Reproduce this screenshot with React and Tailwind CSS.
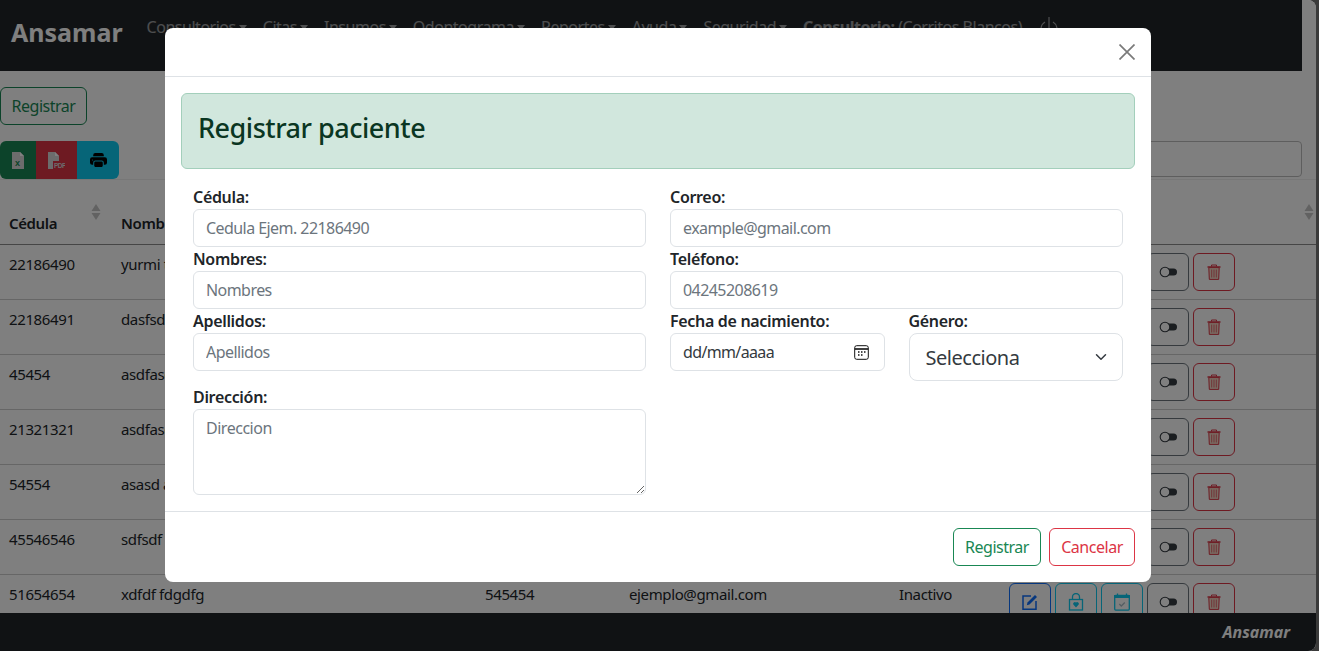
import React from "react";
import { BsPrinterFill } from "react-icons/bs";

const font = { fontFamily: '"Noto Sans", "Open Sans", sans-serif' };

const NavItem = ({ children }) => (
  <span className="flex items-center gap-[3px] whitespace-nowrap">
    {children}
    <span className="inline-block w-0 h-0 border-x-[4px] border-x-transparent border-t-[5px] border-t-current" />
  </span>
);

const SortArrows = () => (
  <svg width="10" height="16" viewBox="0 0 10 16" className="text-[#c4c4c4]" fill="currentColor">
    <path d="M5 0l4.5 7h-9z" />
    <path d="M5 16l4.5-7h-9z" />
  </svg>
);

const XlsIcon = () => (
  <svg width="12" height="17" viewBox="0 0 12 17">
    <path d="M0 0h8l4 4v13H0z" fill="#d8d8d8" />
    <path d="M8 0l4 4H8z" fill="#ffffff" />
    <text x="3" y="14" fontSize="9" fontWeight="700" fill="#198754" fontFamily="Liberation Sans, sans-serif">x</text>
  </svg>
);

const PdfIcon = () => (
  <svg width="17" height="17" viewBox="0 0 17 17">
    <path d="M0 0h7l4 4v5H5v8H0z" fill="#d8d8d8" />
    <path d="M7 0l4 4H7z" fill="#ffffff" />
    <text x="6" y="16" fontSize="6.5" fontWeight="700" fill="#d8d8d8" fontFamily="Liberation Sans, sans-serif">PDF</text>
  </svg>
);

const ActionBtn = ({ border, children }) => (
  <span className={`w-[42px] h-[38px] shrink-0 border rounded-[6px] flex items-center justify-center ${border}`}>
    {children}
  </span>
);

const Row = ({ ced, name, tel, mail, status }) => (
  <tr className="border-b border-[#cccccc] h-[55px] align-top">
    <td className="pl-[9px] pt-[7px] leading-[24px]">{ced}</td>
    <td className="pl-[9px] pt-[7px] leading-[24px] whitespace-nowrap">{name}</td>
    <td className="pl-[9px] pt-[7px] leading-[24px]">{tel}</td>
    <td className="pl-[9px] pt-[7px] leading-[24px]">{mail}</td>
    <td className="pl-[9px] pt-[7px] leading-[24px]">{status}</td>
    <td className="pl-[9px] pt-[8px]">
      <div className="flex gap-[4px]">
        <ActionBtn border="border-[#0d6efd] text-[#0d6efd]">
          <svg width="18" height="18" viewBox="0 0 18 18" fill="none">
            <path d="M15 8v8.2H2V3h8" stroke="currentColor" strokeWidth="1.5" />
            <path d="M6.5 9.5L14 2l2 2-7.5 7.5-2.7.7z" fill="currentColor" />
          </svg>
        </ActionBtn>
        <ActionBtn border="border-[#0dcaf0] text-[#0dcaf0]">
          <svg width="16" height="18" viewBox="0 0 16 18" fill="none">
            <path d="M4.5 6V4a3.5 3.5 0 017 0v2" stroke="currentColor" strokeWidth="1.3" />
            <rect x="1.5" y="6.5" width="13" height="10.5" stroke="currentColor" strokeWidth="1.3" />
            <path d="M8 14.5L5.3 11.6a1.7 1.7 0 012.7-2 1.7 1.7 0 012.7 2z" fill="currentColor" />
          </svg>
        </ActionBtn>
        <ActionBtn border="border-[#0dcaf0] text-[#0dcaf0]">
          <svg width="16" height="18" viewBox="0 0 16 18" fill="none">
            <rect x="0.7" y="2.5" width="14.6" height="14.6" rx="1" stroke="currentColor" strokeWidth="1.3" />
            <rect x="0" y="2" width="16" height="3" fill="currentColor" />
            <path d="M3.5 0.5v2M12.5 0.5v2" stroke="currentColor" strokeWidth="1.3" />
            <path d="M5.3 11l2 2 3.5-3.5" stroke="#a9bcc6" strokeWidth="1.3" />
          </svg>
        </ActionBtn>
        <ActionBtn border="border-[#6c757d] text-[#343a40]">
          <svg width="18" height="12" viewBox="0 0 18 12" fill="none">
            <rect x="7" y="2.5" width="11" height="7" rx="3.5" fill="currentColor" />
            <circle cx="6" cy="6" r="4.8" fill="#ffffff" stroke="currentColor" strokeWidth="1.1" />
          </svg>
        </ActionBtn>
        <ActionBtn border="border-[#dc3545] text-[#dc3545]">
          <svg width="14" height="16" viewBox="0 0 14 16" fill="none">
            <path d="M0.5 3h13" stroke="currentColor" strokeWidth="1.5" />
            <path d="M4.5 2.5V1h5v1.5" stroke="currentColor" strokeWidth="1" />
            <path d="M1.8 3.6h10.4l-.5 11.8H2.3z" fill="#f1d9c6" stroke="currentColor" strokeWidth="1" />
            <path d="M4.7 5.5v8M7 5.5v8M9.3 5.5v8" stroke="currentColor" strokeWidth="0.7" />
          </svg>
        </ActionBtn>
      </div>
    </td>
  </tr>
);

const rows = [
  ["22186490", "yurmi t"],
  ["22186491", "dasfsd"],
  ["45454", "asdfasd"],
  ["21321321", "asdfasd"],
  ["54554", "asasd a"],
  ["45546546", "sdfsdf"],
  ["51654654", "xdfdf fdgdfg", "545454", "ejemplo@gmail.com", "Inactivo"],
];

const inputCls =
  "block w-full h-[38px] px-[12px] border border-[#dee2e6] rounded-[6px] bg-white text-[16px] tracking-[-0.035em] placeholder:text-[#6c757d] outline-none";

const labelCls = "block h-[24px] leading-[24px] font-semibold text-[16px] tracking-[-0.02em] text-[#212529]";

const Field = ({ label, placeholder }) => (
  <div>
    <label className={labelCls}>{label}</label>
    <input className={inputCls} placeholder={placeholder} />
  </div>
);

export default function App() {
  return (
    <div className="w-[1319px] h-[651px] overflow-hidden bg-[#3a3a3a] text-[#212529] text-[16px] tracking-[-0.03em]" style={font}>
      <div className="relative w-[1316px] h-full rounded-r-[8px] overflow-hidden bg-white flex flex-col">
        <nav className="w-[1302px] h-[71px] shrink-0 bg-[#212529] flex items-start">
          <span className="ml-[11px] mt-[12px] text-[25px] font-bold text-white leading-[40px] tracking-normal">Ansamar</span>
          <div className="ml-[24px] mt-[15px] flex items-center gap-[16px] text-[16px] leading-[24px] text-white/55">
            <NavItem>Consultorios</NavItem>
            <NavItem>Citas</NavItem>
            <NavItem>Insumos</NavItem>
            <NavItem>Odontograma</NavItem>
            <NavItem>Reportes</NavItem>
            <NavItem>Ayuda</NavItem>
            <NavItem>Seguridad</NavItem>
            <span className="whitespace-nowrap"><b>Consultorio:</b> (Corritos Blancos)</span>
            <svg width="20" height="24" viewBox="0 0 20 24" fill="none" stroke="currentColor" strokeWidth="1.2" className="ml-[1px]">
              <path d="M10 2v12M6 7a8 8 0 108 0" />
            </svg>
          </div>
        </nav>

        <main className="flex-1 min-h-0 overflow-hidden pt-[16px]">
          <button className="block h-[38px] w-[87px] border border-[#198754] rounded-[6px] text-[#198754]">Registrar</button>
          <div className="mt-[16px] h-[38px] w-[1302px] flex justify-between">
            <div className="flex h-[38px] rounded-[6px] overflow-hidden">
              <span className="w-[36px] bg-[#198754] flex items-center justify-center"><XlsIcon /></span>
              <span className="w-[41px] bg-[#dc3545] flex items-center justify-center"><PdfIcon /></span>
              <span className="w-[42px] bg-[#0dcaf0] flex items-center justify-center text-black"><BsPrinterFill size={17} /></span>
            </div>
            <input className="w-[300px] h-[36px] border border-[#bdbdbd] rounded-[4px] bg-white" />
          </div>
          <table className="w-[1316px] table-fixed border-t border-[#eeeeee] border-collapse text-[15px] tracking-[-0.025em]">
            <colgroup>
              <col className="w-[112px]" />
              <col className="w-[364px]" />
              <col className="w-[144px]" />
              <col className="w-[270px]" />
              <col className="w-[110px]" />
              <col />
            </colgroup>
            <thead>
              <tr className="h-[65px] border-b border-[#8c8c8c] text-left">
                <th className="relative pl-[9px] pt-[22px] font-semibold">
                  Cédula
                  <span className="absolute top-[24px] right-[11px]"><SortArrows /></span>
                </th>
                <th className="pl-[9px] pt-[22px] font-semibold whitespace-nowrap">Nombres</th>
                <th />
                <th />
                <th />
                <th className="relative">
                  <span className="absolute top-[24px] right-[2px]"><SortArrows /></span>
                </th>
              </tr>
            </thead>
            <tbody>
              {rows.map((r) => (
                <Row key={r[0]} ced={r[0]} name={r[1]} tel={r[2]} mail={r[3]} status={r[4]} />
              ))}
            </tbody>
          </table>
        </main>

        <footer className="h-[38px] shrink-0 bg-[#212529] flex items-center justify-end pr-[26px]">
          <span className="text-[16px] font-bold italic text-white tracking-normal">Ansamar</span>
        </footer>

        <div className="absolute inset-0 bg-black/50">
          <div className="mx-auto mt-[28px] w-[986px] h-[554px] bg-white rounded-[8px] flex flex-col">
            <div className="h-[49px] shrink-0 border-b border-[#dee2e6] flex items-center justify-end pr-[16px]">
              <svg width="16" height="16" viewBox="0 0 16 16" stroke="#7a7a7a" strokeWidth="1.7">
                <path d="M0.5 0.5l15 15M15.5 0.5l-15 15" />
              </svg>
            </div>
            <div className="flex-1 p-[16px]">
              <div className="h-[76px] pb-[6px] bg-[#d1e7dd] border border-[#a3cfbb] rounded-[6px] flex items-center pl-[16px] text-[#0a3622] text-[27px] font-medium">
                Registrar paciente
              </div>
              <div className="mt-[16px] px-[12px] grid grid-cols-2 gap-x-[24px]">
                <Field label="Cédula:" placeholder="Cedula Ejem. 22186490" />
                <Field label="Correo:" placeholder="example@gmail.com" />
                <Field label="Nombres:" placeholder="Nombres" />
                <Field label="Teléfono:" placeholder="04245208619" />
                <Field label="Apellidos:" placeholder="Apellidos" />
                <div className="grid grid-cols-2 gap-x-[24px] h-[72px]">
                  <div>
                    <label className={labelCls}>Fecha de nacimiento:</label>
                    <div className="h-[38px] pl-[12px] pr-[15px] border border-[#dee2e6] rounded-[6px] flex items-center justify-between text-[#343a40] tracking-[-0.04em]">
                      <span>dd/mm/aaaa</span>
                      <svg width="15" height="15" viewBox="0 0 15 15" fill="none" stroke="#111111">
                        <rect x="0.7" y="0.7" width="13.6" height="13.6" rx="2" />
                        <path d="M1 4h13" strokeWidth="1.6" />
                        <path d="M4 7h1.5M7 7h1.5M10 7h1.5M4 10h1.5M7 10h1.5" strokeWidth="1.4" />
                      </svg>
                    </div>
                  </div>
                  <div>
                    <label className={labelCls}>Género:</label>
                    <div className="h-[48px] pl-[16px] pr-[15px] border border-[#dee2e6] rounded-[8px] flex items-center justify-between text-[20px] text-[#343a40]">
                      <span className="pt-[2px]">Selecciona</span>
                      <svg width="12" height="12" viewBox="0 0 16 16" fill="none" stroke="#343a40" strokeWidth="2" strokeLinecap="round" strokeLinejoin="round">
                        <path d="M2 5l6 6 6-6" />
                      </svg>
                    </div>
                  </div>
                </div>
                <div className="mt-[4px]">
                  <label className={labelCls}>Dirección:</label>
                  <textarea className="block w-full h-[86px] px-[12px] py-[6px] border border-[#dee2e6] rounded-[6px] placeholder:text-[#6c757d] outline-none" placeholder="Direccion" />
                </div>
              </div>
            </div>
            <div className="h-[71px] shrink-0 border-t border-[#dee2e6] flex items-center justify-end gap-[8px] pr-[16px]">
              <button className="w-[88px] h-[38px] border border-[#198754] rounded-[6px] text-[#198754]">Registrar</button>
              <button className="w-[86px] h-[38px] border border-[#dc3545] rounded-[6px] text-[#dc3545]">Cancelar</button>
            </div>
          </div>
        </div>
      </div>
    </div>
  );
}
